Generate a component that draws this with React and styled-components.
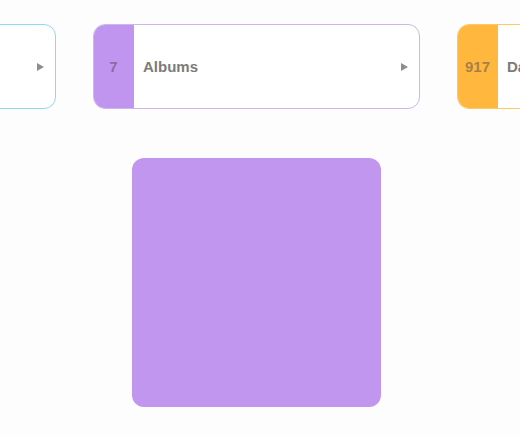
import React from 'react'
import styled, { createGlobalStyle } from 'styled-components';

const GlobalStyle = createGlobalStyle`
  body {
    margin: 0;
    background-color: #fdfdfd;
    font-family: "Helvetica Neue", "Liberation Sans", Arial, sans-serif;
    overflow: hidden;
  }
`;

const Page = styled.div`
  width: 520px;
  height: 437px;
  overflow: hidden;
  background-color: #fdfdfd;
`;

const Row = styled.div`
  display: flex;
  gap: 37px;
  margin-left: -271px;
  padding-top: 24px;
`;

const Card = styled.div`
  flex: 0 0 327px;
  height: 85px;
  box-sizing: border-box;
  display: flex;
  align-items: center;
  background-color: #fff;
  border: 1px solid ${props => props.color};
  border-radius: 12px;
  overflow: hidden;
`;

const Count = styled.div`
  align-self: stretch;
  width: 41px;
  margin: -1px 0 -1px -1px;
  display: flex;
  align-items: center;
  justify-content: center;
  background-color: ${props => props.color};
  color: rgba(80, 70, 80, 0.5);
  font-size: 15px;
  font-weight: bold;
`;

const Label = styled.span`
  flex: 1;
  padding-left: 9px;
  font-size: 15px;
  font-weight: bold;
  color: #7b7b7b;
`;

const Arrow = styled.span`
  width: 0;
  height: 0;
  margin-right: 11px;
  border-top: 4px solid transparent;
  border-bottom: 4px solid transparent;
  border-left: 7px solid #8e8e8e;
`;

const Stage = styled.div`
  padding: 49px 0 0 132px;
`;

const Artwork = styled.div`
  width: 249px;
  height: 249px;
  border-radius: 12px;
  background-color: ${props => props.color};
`;

const items = [
  { count: 12, label: 'Artists', color: '#5ac8fa', border: '#8fd8f8' },
  { count: 7, label: 'Albums', color: '#c095f0', border: '#cdb6ec' },
  { count: 917, label: 'Days', color: '#ffb83d', border: '#ffc766' },
];

function App() {
  return (
    <Page>
      <GlobalStyle />
      <Row>
        {items.map(item => (
          <Card key={item.label} color={item.border}>
            <Count color={item.color}>{item.count}</Count>
            <Label>{item.label}</Label>
            <Arrow />
          </Card>
        ))}
      </Row>
      <Stage>
        <Artwork color="#c196ef" />
      </Stage>
    </Page>
  )
}

export default App
